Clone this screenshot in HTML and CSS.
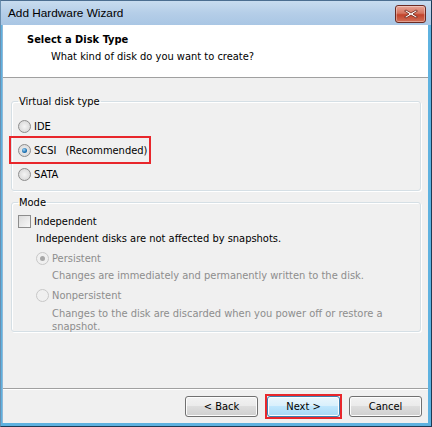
FILE: index.html
```html
<!DOCTYPE html>
<html>
<head>
<meta charset="utf-8">
<link rel="stylesheet" href="styles.css">
</head>
<body>
<div class="window">
  <div class="titlebar">
    <span class="title">Add Hardware Wizard</span>
    <span class="close"><svg width="16" height="10" viewBox="0 0 16 10"><path d="M3 1 L8 4 L13 1 L14.5 2 L10 5 L14.5 8 L13 9 L8 6 L3 9 L1.5 8 L6 5 L1.5 2 Z" fill="#fff" stroke="#6a1f14" stroke-width="0.8"/></svg></span>
  </div>
  <div class="client">
    <div class="header">
      <div class="h-title">Select a Disk Type</div>
      <div class="h-sub">What kind of disk do you want to create?</div>
    </div>
    <div class="body">
      <fieldset class="group g1">
        <legend>Virtual disk type</legend>
        <div class="opt"><span class="radio"></span>IDE</div>
        <div class="opt hl"><span class="radio on"></span>SCSI<span class="rec">(Recommended)</span></div>
        <div class="opt"><span class="radio"></span>SATA</div>
      </fieldset>
      <fieldset class="group g2">
        <legend>Mode</legend>
        <div class="opt chk"><span class="check"></span>Independent</div>
        <div class="note">Independent disks are not affected by snapshots.</div>
        <div class="sub">
          <div class="opt dis"><span class="radio dison"></span>Persistent</div>
          <div class="desc">Changes are immediately and permanently written to the disk.</div>
          <div class="opt dis"><span class="radio disoff"></span>Nonpersistent</div>
          <div class="desc last">Changes to the disk are discarded when you power off or restore a snapshot.</div>
        </div>
      </fieldset>
    </div>
    <div class="footer">
      <button class="btn">&lt; Back</button>
      <span class="nexthl"><button class="btn next">Next &gt;</button></span>
      <button class="btn">Cancel</button>
    </div>
  </div>
</div>
</body>
</html>
```
FILE: styles.css
```css
html, body { margin: 0; padding: 0; background: #fff; }
.window {
  width: 432px; height: 427px; box-sizing: border-box;
  background: #5eb2e0;
  border: 1px solid #1c3a55;
  border-top-color: #4c6e90;
  border-left-color: #6a8fb0;
  padding: 0 3px 3px 1px;
  display: flex; flex-direction: column;
  font-family: "DejaVu Sans Condensed", "DejaVu Sans", sans-serif;
  font-stretch: condensed;
  font-size: 11px;
  color: #000;
}
.titlebar {
  height: 24px; flex: none;
  margin: 0 -3px 0 -1px;
  padding: 0 4px 0 7px;
  background: linear-gradient(#c8dcef, #b5cee8 50%, #a9c6e4);
  display: flex; align-items: center; justify-content: space-between;
}
.title { font-family: "Liberation Sans", sans-serif; font-stretch: normal; font-size: 11.8px; color: #000; margin-top: 0; }
.close {
  width: 31px; height: 18px; box-sizing: border-box;
  border: 1px solid #6b2a22; border-radius: 3px;
  background: linear-gradient(#e8a596, #d57560 45%, #c2432c 55%, #d27058);
  display: flex; align-items: center; justify-content: center;
  margin-top: 1px; margin-right: 1px;
  box-shadow: inset 0 0 0 1px rgba(255,255,255,0.35);
}
.client {
  flex: 1; background: #f0f0f0;
  display: flex; flex-direction: column;
  border-left: 1px solid #8fb8d8;
}
.header {
  height: 53px; background: #fff;
  border-bottom: 1px solid #a0a0a0;
  padding: 8px 0 0 24px; box-sizing: border-box;
}
.h-title { font-weight: bold; font-size: 11px; line-height: 14px; }
.h-sub { padding-left: 24px; line-height: 14px; margin-top: 3px; color: #000; }
.body { flex: 1; padding: 17px 7px 0 8px; }
.group {
  margin: 0; padding: 0 0 0 6px;
  border: 1px solid #d5dfe5; border-radius: 3px;
  box-shadow: inset 1px 1px 0 #fff, 1px 1px 0 #fff;
}
.group legend { padding: 0 1px; margin-left: 0; line-height: 13px; }
.g1 { height: 96px; box-sizing: border-box; padding-top: 6px; }
.g2 { margin-top: 5px; height: 136px; box-sizing: border-box; padding-top: 3px; }
.opt { display: flex; align-items: center; height: 24px; }
.g1 .opt { width: fit-content; }
.hl { outline: 2px solid #e8262b; outline-offset: 0; padding: 0 2px 0 7px; margin-left: -7px; height: 24px; }
.rec { margin-left: 9px; }
.radio {
  width: 13px; height: 13px; border-radius: 50%; box-sizing: border-box;
  border: 1px solid #8d8d8d;
  background: radial-gradient(circle at 50% 50%, #f4f4f4, #dcdcdc 70%, #c8c8c8);
  margin-right: 3px; position: relative; flex: none;
}
.radio.on::after {
  content: ""; position: absolute; left: 3px; top: 3px; width: 5px; height: 5px; border-radius: 50%;
  background: radial-gradient(circle at 40% 35%, #9fd4f4, #1a6fb0 60%, #0d4a88);
}
.radio.dison, .radio.disoff { border-color: #c8c8c8; background: #f0f0f0; }
.radio.dison::after {
  content: ""; position: absolute; left: 3px; top: 3px; width: 5px; height: 5px; border-radius: 50%;
  background: #a8a8a8;
}
.check {
  width: 13px; height: 13px; box-sizing: border-box; border: 1px solid #8d8d8d;
  background: linear-gradient(135deg, #dcdcdc, #f8f8f8);
  margin-right: 3px; flex: none;
}
.opt.chk { height: 18px; }
.note { padding-left: 18px; line-height: 18px; }
.sub { padding-left: 18px; color: #8d8d8d; }
.sub .opt { height: 20px; }
.desc { padding-left: 16px; line-height: 13px; margin-top: 1px; margin-bottom: 3px; }
.desc.last { margin-top: 2px; }
.footer {
  flex: none; height: 34px; border-top: 1px solid #a0a0a0;
  box-shadow: inset 0 1px 0 #fff;
  display: flex; align-items: center; justify-content: flex-end;
  padding-right: 6px; gap: 9px;
}
.btn {
  width: 73px; height: 21px; margin: 0; padding: 0;
  font-family: "DejaVu Sans Condensed", "DejaVu Sans", sans-serif; font-stretch: condensed;
  font-size: 11px; color: #000;
  border: 1px solid #707070; border-radius: 3px;
  background: linear-gradient(#f2f2f2, #ebebeb 45%, #dddddd 50%, #cfcfcf);
  box-shadow: inset 0 0 0 1px #fcfcfc;
}
.nexthl { display: flex; outline: 2px solid #e8262b; }
.btn.next {
  border-color: #3c7fb1;
  background: linear-gradient(#eaf6fd, #d9f0fc 45%, #bee6fd 50%, #a7d9f5);
}
```
